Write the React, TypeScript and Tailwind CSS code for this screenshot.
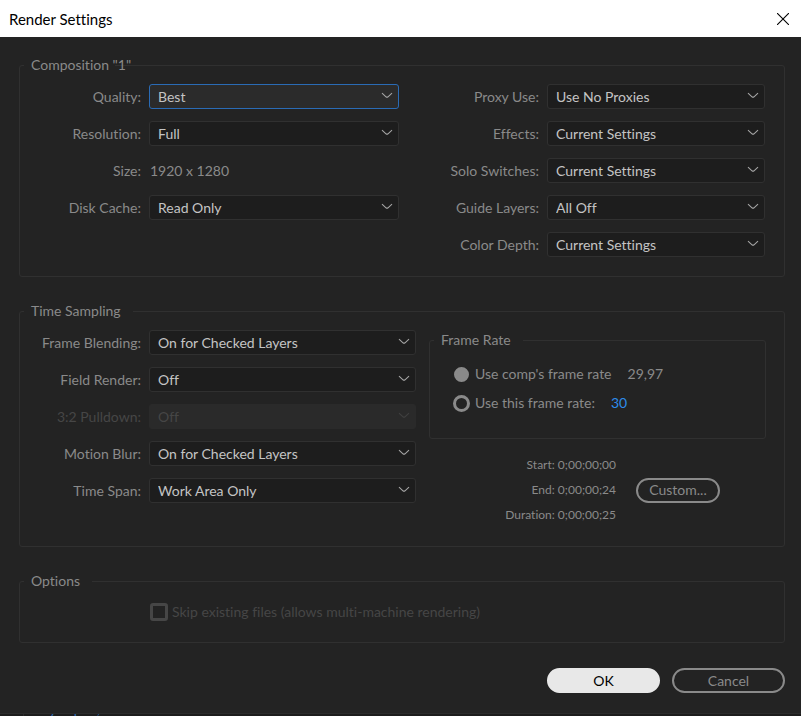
import React, { useId, useState } from "react";
import type { ReactNode } from "react";

type FieldProps = {
  label: string;
  value: string;
  options?: string[];
  disabled?: boolean;
  active?: boolean;
};

function Field({ label, value, options = [], disabled = false, active = false }: FieldProps) {
  const id = useId();
  const box = active
    ? "border-[#2a6bb5] bg-[#2b2b2b] text-[#c4c4c4]"
    : disabled
      ? "border-[#2a2a2a] bg-[#2a2a2a] text-[#464646]"
      : "border-[#303030] bg-[#1d1d1d] text-[#c4c4c4]";
  return (
    <>
      <label
        htmlFor={id}
        className={"whitespace-nowrap pr-2 text-right " + (disabled ? "text-[#464646]" : "")}
      >
        {label}
      </label>
      <div className="relative">
        <select
          id={id}
          defaultValue={value}
          disabled={disabled}
          className={
            "block h-[25px] w-full appearance-none rounded-[3px] border pr-6 pl-2 leading-5 opacity-100 outline-none " +
            box
          }
        >
          {[value, ...options].map((o) => (
            <option key={o}>{o}</option>
          ))}
        </select>
        <svg
          viewBox="0 0 12 7"
          className={
            "pointer-events-none absolute top-[8px] right-[6px] h-[7px] w-3 " +
            (disabled ? "text-[#404040]" : "text-[#a6a6a6]")
          }
          fill="none"
          stroke="currentColor"
          strokeWidth="1.1"
          aria-hidden="true"
        >
          <path d="M1 1.2 L5 4.8 Q6 5.6 7 4.8 L11 1.2" />
        </svg>
      </div>
    </>
  );
}

function Group({
  title,
  legendClass = "pr-3",
  className = "",
  children,
}: {
  title: string;
  legendClass?: string;
  className?: string;
  children: ReactNode;
}) {
  return (
    <fieldset className={"min-w-0 rounded-[3px] border border-[#303030] " + className}>
      <legend className={"ml-1 h-5 whitespace-nowrap pl-[7px] leading-5 " + legendClass}>
        {title}
      </legend>
      {children}
    </fieldset>
  );
}

const pill = "h-[25px] rounded-full border-2 leading-5";

export default function App() {
  const [useComp, setUseComp] = useState(true);
  const radio =
    "m-0 size-[17px] shrink-0 appearance-none rounded-full border-[3px] border-[#8a8a8a] checked:size-[15px] checked:mx-px checked:bg-[#8a8a8a]";

  return (
    <div className="flex min-h-screen flex-col bg-[#232323] font-['Lato','Noto_Sans',sans-serif] text-[14px] leading-5 text-[#8a8a8a] [font-variant-ligatures:none]">
      <header className="flex h-[37px] items-center justify-between bg-white pr-3 pl-[9px] text-black">
        <h1 className="text-[15px]">Render Settings</h1>
        <button type="button" aria-label="Close">
          <svg viewBox="0 0 12 12" className="size-3" stroke="currentColor" strokeWidth="1.1" aria-hidden="true">
            <path d="M0 0 L12 12 M12 0 L0 12" />
          </svg>
        </button>
      </header>

      <main className="flex flex-col px-4 pt-[18px] sm:pr-4 sm:pl-[19px]">
        <Group title={'Composition "1"'} legendClass="w-[91px]" className="pb-[19px]">
          <div className="grid grid-cols-[379fr_366fr] items-start pt-[9px] pr-[19px]">
            <div className="grid grid-cols-[129px_1fr] items-center gap-y-[12px]">
              <Field label="Quality:" value="Best" options={["Draft", "Wireframe"]} active />
              <Field label="Resolution:" value="Full" options={["Half", "Third", "Quarter"]} />
              <span className="flex h-[25px] items-center justify-end pr-2">Size:</span>
              <span className="pl-px">1920 x 1280</span>
              <Field label="Disk Cache:" value="Read Only" options={["Current Settings"]} />
            </div>
            <div className="grid grid-cols-[148px_1fr] items-center gap-y-[12px]">
              <Field label="Proxy Use:" value="Use No Proxies" options={["Use All Proxies"]} />
              <Field label="Effects:" value="Current Settings" options={["All On", "All Off"]} />
              <Field label="Solo Switches:" value="Current Settings" options={["All Off"]} />
              <Field label="Guide Layers:" value="All Off" options={["Current Settings"]} />
              <Field label="Color Depth:" value="Current Settings" />
            </div>
          </div>
        </Group>

        <Group title="Time Sampling" className="mt-6 pb-[21px]">
          <div className="grid grid-cols-[396fr_337fr] items-start gap-x-[13px] pt-[9px] pr-[18px]">
            <div className="grid grid-cols-[129px_1fr] items-center gap-y-[12px]">
              <Field label="Frame Blending:" value="On for Checked Layers" options={["Off for All Layers"]} />
              <Field label="Field Render:" value="Off" options={["Upper Field First"]} />
              <Field label="3:2 Pulldown:" value="Off" disabled />
              <Field label="Motion Blur:" value="On for Checked Layers" options={["Off for All Layers"]} />
              <Field label="Time Span:" value="Work Area Only" options={["Length of Comp"]} />
            </div>
            <div>
              <Group title="Frame Rate" legendClass="pr-3" className="pb-[25px]">
                <div className="flex flex-col gap-[9px] pt-[14px] pl-[23px]">
                  <div className="flex h-5 items-center">
                    <input
                      id="comp-rate"
                      type="radio"
                      name="rate"
                      checked={useComp}
                      onChange={() => setUseComp(true)}
                      className={radio}
                    />
                    <label htmlFor="comp-rate" className="pl-[5px]">
                      Use comp's frame rate
                    </label>
                    <span className="pl-4">29,97</span>
                  </div>
                  <div className="flex h-5 items-center">
                    <input
                      id="this-rate"
                      type="radio"
                      name="rate"
                      checked={!useComp}
                      onChange={() => setUseComp(false)}
                      className={radio}
                    />
                    <label htmlFor="this-rate" className="pl-[5px]">
                      Use this frame rate:
                    </label>
                    <input
                      aria-label="Frame rate"
                      defaultValue="30"
                      className="ml-4 w-10 bg-transparent text-[#2d8ceb] outline-none"
                    />
                  </div>
                </div>
              </Group>
              <div className="flex items-center gap-5 pt-4">
                <div className="flex w-[187px] flex-col gap-[5px] text-right text-[12px] leading-5">
                  <p>Start: 0;00;00;00</p>
                  <p>End: 0;00;00;24</p>
                  <p>Duration: 0;00;00;25</p>
                </div>
                <button type="button" className={pill + " w-[84px] border-[#8a8a8a]"}>
                  Custom...
                </button>
              </div>
            </div>
          </div>
        </Group>

        <Group title="Options" className="mt-6 pb-[20px]">
          <div className="flex items-center pt-[11px] pl-[130px] text-[#464646]">
            <input
              id="skip"
              type="checkbox"
              disabled
              className="m-0 size-[18px] shrink-0 appearance-none rounded-[3px] border-[3px] border-[#464646]"
            />
            <label htmlFor="skip" className="pl-1">
              Skip existing files (allows multi-machine rendering)
            </label>
          </div>
        </Group>

        <div className="flex justify-end gap-3 pt-[25px] pb-5">
          <button type="button" className={pill + " w-[113px] border-[#e8e8e8] bg-[#e8e8e8] text-black"}>
            OK
          </button>
          <button type="button" className={pill + " w-[113px] border-[#8a8a8a]"}>
            Cancel
          </button>
        </div>
      </main>

      <footer className="mt-auto flex h-1 items-end overflow-hidden border-t border-[#2b2b2b] bg-[#1c1c1c] text-[#2a6bb5]">
        <span className="h-5 w-6 shrink-0 border-r border-[#2b2b2b]" />
        <span className="h-4 pl-[3px] leading-4">Recycleped,ss</span>
      </footer>
    </div>
  );
}
